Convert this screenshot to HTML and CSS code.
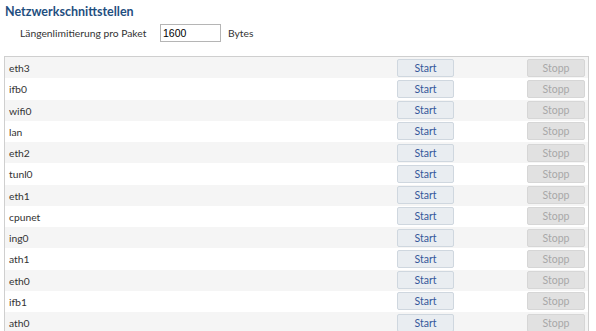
FILE: index.html
```html
<!DOCTYPE html>
<html lang="de">
<head>
<meta charset="utf-8">
<link rel="stylesheet" href="styles.css">
</head>
<body>
<h2 class="title">Netzwerkschnittstellen</h2>
<div class="setting">
  <label class="label">Längenlimitierung pro Paket</label>
  <input class="field" type="text" value="1600">
  <span class="unit">Bytes</span>
</div>
<div class="table">
  <div class="row"><span class="name">eth3</span><button class="btn start">Start</button><button class="btn stop">Stopp</button></div>
  <div class="row"><span class="name">ifb0</span><button class="btn start">Start</button><button class="btn stop">Stopp</button></div>
  <div class="row"><span class="name">wifi0</span><button class="btn start">Start</button><button class="btn stop">Stopp</button></div>
  <div class="row"><span class="name">lan</span><button class="btn start">Start</button><button class="btn stop">Stopp</button></div>
  <div class="row"><span class="name">eth2</span><button class="btn start">Start</button><button class="btn stop">Stopp</button></div>
  <div class="row"><span class="name">tunl0</span><button class="btn start">Start</button><button class="btn stop">Stopp</button></div>
  <div class="row"><span class="name">eth1</span><button class="btn start">Start</button><button class="btn stop">Stopp</button></div>
  <div class="row"><span class="name">cpunet</span><button class="btn start">Start</button><button class="btn stop">Stopp</button></div>
  <div class="row"><span class="name">ing0</span><button class="btn start">Start</button><button class="btn stop">Stopp</button></div>
  <div class="row"><span class="name">ath1</span><button class="btn start">Start</button><button class="btn stop">Stopp</button></div>
  <div class="row"><span class="name">eth0</span><button class="btn start">Start</button><button class="btn stop">Stopp</button></div>
  <div class="row"><span class="name">ifb1</span><button class="btn start">Start</button><button class="btn stop">Stopp</button></div>
  <div class="row"><span class="name">ath0</span><button class="btn start">Start</button><button class="btn stop">Stopp</button></div>
</div>
</body>
</html>
```
FILE: styles.css
```css
html, body {
  margin: 0;
  padding: 0;
  background: #fff;
  font-family: "Lato", "Open Sans", sans-serif;
  font-size: 10.3px;
  color: #333;
}
.title {
  margin: 0;
  padding: 4px 0 0 5px;
  height: 16px;
  font-size: 12.5px;
  font-weight: bold;
  color: #1f4f7f;
  line-height: 16px;
}
.setting {
  display: flex;
  align-items: center;
  height: 18px;
  margin-top: 4px;
  padding-left: 20px;
}
.label {
  width: 140px;
}
.field {
  box-sizing: border-box;
  width: 61px;
  height: 18px;
  margin: 0;
  padding: 0 2px;
  border: 1px solid #b5b5b5;
  font-family: "Liberation Sans", Arial, sans-serif;
  font-size: 10.5px;
  color: #000;
}
.unit {
  margin-left: 7px;
}
.table {
  margin: 14px 7px 0 4px;
  border: 1px solid #cfcfcf;
  border-bottom: none;
}
.row {
  display: flex;
  align-items: center;
  height: 21.25px;
  padding-left: 4px;
}
.row:nth-child(odd) {
  background: #f5f5f5;
}
.name {
  flex: 1;
  padding-top: 1px;
}
.btn {
  box-sizing: border-box;
  height: 18px;
  margin: 0;
  padding: 0;
  border-radius: 2px;
  font-family: "Lato", "Open Sans", sans-serif;
  font-size: 10.5px;
  line-height: 16px;
}
.start {
  width: 57px;
  background: #e9edf1;
  border: 1px solid #cfd7df;
  color: #35589a;
  margin-right: 73px;
}
.stop {
  width: 58px;
  background: #e1e1e1;
  border: 1px solid #d6d6d6;
  color: #a8a8a8;
  margin-right: 3px;
}
```
